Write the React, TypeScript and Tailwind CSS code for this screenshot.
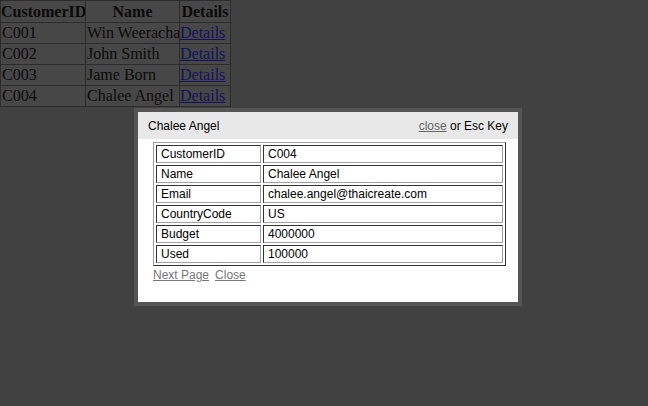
import React from "react";

const customers = [
  { id: "C001", name: "Win Weerachai" },
  { id: "C002", name: "John Smith" },
  { id: "C003", name: "Jame Born" },
  { id: "C004", name: "Chalee Angel" },
];

const detail = [
  ["CustomerID", "C004"],
  ["Name", "Chalee Angel"],
  ["Email", "chalee.angel@thaicreate.com"],
  ["CountryCode", "US"],
  ["Budget", "4000000"],
  ["Used", "100000"],
];

export default function App() {
  return (
    <div className="relative w-full min-h-screen h-[406px] bg-[#414141] overflow-hidden">
      {/* page behind the overlay */}
      <table className="w-[230px] table-fixed border-collapse bg-[#474747] text-[#0a0a0a] text-[16px] leading-[20px] font-['Liberation_Serif',serif]">
        <colgroup>
          <col className="w-[85px]" />
          <col className="w-[94px]" />
          <col className="w-[51px]" />
        </colgroup>
        <thead>
          <tr className="h-[22px]">
            <th className="border border-[#2c2c2c] p-0 font-bold text-center whitespace-nowrap overflow-hidden">CustomerID</th>
            <th className="border border-[#2c2c2c] p-0 font-bold text-center">Name</th>
            <th className="border border-[#2c2c2c] p-0 font-bold text-center whitespace-nowrap">Details</th>
          </tr>
        </thead>
        <tbody>
          {customers.map((c) => (
            <tr key={c.id} className="h-[21px]">
              <td className="border border-[#2c2c2c] p-0 pl-[1px] whitespace-nowrap">{c.id}</td>
              <td className="border border-[#2c2c2c] p-0 pl-[1px] whitespace-nowrap overflow-hidden">{c.name}</td>
              <td className="border border-[#2c2c2c] p-0 whitespace-nowrap">
                <a href="#" className="underline text-[#12125c]">Details</a>
              </td>
            </tr>
          ))}
        </tbody>
      </table>

      {/* popup window */}
      <div className="absolute left-[134px] top-[108px] w-[388px] h-[198px] border-4 border-[#555555] bg-white font-['Liberation_Sans',Arial,sans-serif] text-[12px] text-black">
        <div className="flex items-center justify-between h-[27px] bg-[#e8e8e8] pl-[10px] pr-[10px]">
          <span>Chalee Angel</span>
          <span>
            <a href="#" className="underline text-[#666666]">close</a> or Esc Key
          </span>
        </div>
        <div className="pl-[15px] pt-[3px]">
          <table className="border-separate border-spacing-[2px] border border-t-[#a0a0a0] border-l-[#a0a0a0] border-r-[#333333] border-b-[#333333] w-[353px]">
            <tbody>
              {detail.map(([k, v]) => (
                <tr key={k}>
                  <td className="w-[105px] h-[18px] p-0 pl-[4px] leading-[16px] border border-t-[#333333] border-l-[#333333] border-r-[#a0a0a0] border-b-[#a0a0a0]">
                    {k}
                  </td>
                  <td className="h-[18px] p-0 pl-[4px] leading-[16px] border border-t-[#333333] border-l-[#333333] border-r-[#a0a0a0] border-b-[#a0a0a0]">
                    {v}
                  </td>
                </tr>
              ))}
            </tbody>
          </table>
          <div className="flex gap-[6px] mt-[1px] leading-[16px]">
            <a href="#" className="underline text-[#777777]">Next Page</a>
            <a href="#" className="underline text-[#777777]">Close</a>
          </div>
        </div>
      </div>
    </div>
  );
}
